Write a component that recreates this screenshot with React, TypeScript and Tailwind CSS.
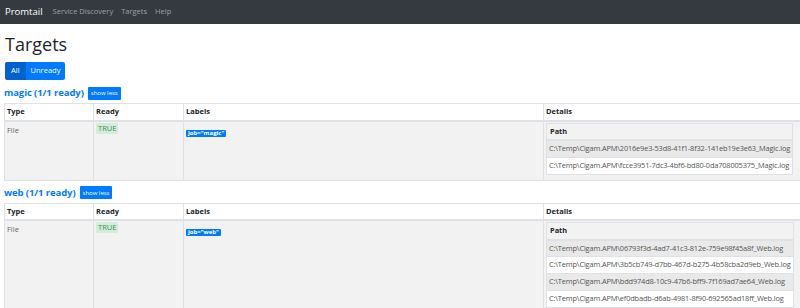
import React from 'react';

const MAGIC_PATHS = [
  'C:\\Temp\\Cigam.APM\\2016e9e3-53d8-41f1-8f32-141eb19e3e63_Magic.log',
  'C:\\Temp\\Cigam.APM\\fcce3951-7dc3-4bf6-bd80-0da708005375_Magic.log',
];

const WEB_PATHS = [
  'C:\\Temp\\Cigam.APM\\06793f3d-4ad7-41c3-812e-759e98f45a8f_Web.log',
  'C:\\Temp\\Cigam.APM\\3b5cb749-d7bb-467d-b275-4b58cba2d9eb_Web.log',
  'C:\\Temp\\Cigam.APM\\bdd974d8-10c9-47b6-bff9-7f169ad7ae64_Web.log',
  'C:\\Temp\\Cigam.APM\\ef0dbadb-d6ab-4981-8f90-692565ad18ff_Web.log',
];

const TargetSection = ({ name, paths }: { name: string; paths: string[] }) => {
  return (
    <div>
      {/* Section header */}
      <div className="flex items-center gap-[4px] h-[14px]">
        <a className="text-[#007bff] font-bold text-[9.5px] leading-none cursor-pointer tracking-[-0.1px]">
          {name} (1/1 ready)
        </a>
        <button className="bg-[#007bff] text-white text-[6px] leading-none px-[3px] h-[13px] rounded-[1px]">
          show less
        </button>
      </div>

      <table className="mt-[3px] table-fixed border-collapse w-[830px] text-[7.5px] text-[#212529]">
        <colgroup>
          <col className="w-[89px]" />
          <col className="w-[90px]" />
          <col className="w-[360px]" />
          <col />
        </colgroup>
        <thead>
          <tr className="h-[17px] bg-white">
            {['Type', 'Ready', 'Labels', 'Details'].map((h) => (
              <th
                key={h}
                className="border border-[#dee2e6] border-b-[2px] px-[2px] text-left font-bold align-middle"
              >
                {h}
              </th>
            ))}
          </tr>
        </thead>
        <tbody>
          <tr className="bg-[#f2f2f2] align-top">
            <td className="border border-[#dee2e6] px-[2px] pt-[3px] text-[#666666]">File</td>
            <td className="border border-[#dee2e6] px-[2px] pt-[1px]">
              <span className="inline-block bg-[#d4edda] text-[#3c8f52] px-[2px] h-[11px] leading-[11px] rounded-[1px]">
                TRUE
              </span>
            </td>
            <td className="border border-[#dee2e6] px-[2px] pt-[5px]">
              <span className="inline-block bg-[#007bff] text-white font-bold text-[6px] px-[2px] h-[7px] leading-[7px] rounded-[1px]">
                job="{name}"
              </span>
            </td>
            <td className="border border-[#dee2e6] px-[2px] pt-[1px] pb-[5px]">
              <table className="border-collapse text-[7.4px] text-[#555555]">
                <thead>
                  <tr className="h-[17px]">
                    <th className="border border-[#dee2e6] border-b-[2px] px-[3px] text-left font-bold text-[#212529]">
                      Path
                    </th>
                  </tr>
                </thead>
                <tbody>
                  {paths.map((p, i) => (
                    <tr key={p} className={`h-[17px] ${i % 2 === 0 ? 'bg-[#e9e9e9]' : 'bg-white'}`}>
                      <td className="border border-[#dee2e6] px-[2px] whitespace-nowrap tracking-[-0.15px]">{p}</td>
                    </tr>
                  ))}
                </tbody>
              </table>
            </td>
          </tr>
        </tbody>
      </table>
    </div>
  );
};

const App = () => {
  return (
    <div className="w-[800px] h-[308px] overflow-hidden bg-white font-['Segoe_UI','Open_Sans',sans-serif]">
      {/* Navbar */}
      <nav className="h-[24px] bg-[#343a40] flex items-center px-[5px] gap-[10px]">
        <span className="text-white text-[9.5px] leading-none">Promtail</span>
        <div className="flex items-center gap-[8px] text-[7.5px] text-white/50">
          <span>Service Discovery</span>
          <span>Targets</span>
          <span>Help</span>
        </div>
      </nav>

      <div className="px-[4px]">
        <h1 className="mt-[8px] ml-[1px] text-[18px] leading-[24px] font-medium text-[#212529]">Targets</h1>

        {/* Filter buttons */}
        <div className="mt-[6px] ml-[1px] flex text-[7.5px] text-white">
          <button className="bg-[#0062cc] h-[18px] px-[6px] rounded-l-[2px]">All</button>
          <button className="bg-[#007bff] h-[18px] px-[5px] rounded-r-[2px]">Unready</button>
        </div>

        <div className="mt-[6px] flex flex-col gap-[5px]">
          <TargetSection name="magic" paths={MAGIC_PATHS} />
          <TargetSection name="web" paths={WEB_PATHS} />
        </div>
      </div>
    </div>
  );
};

export default App;
